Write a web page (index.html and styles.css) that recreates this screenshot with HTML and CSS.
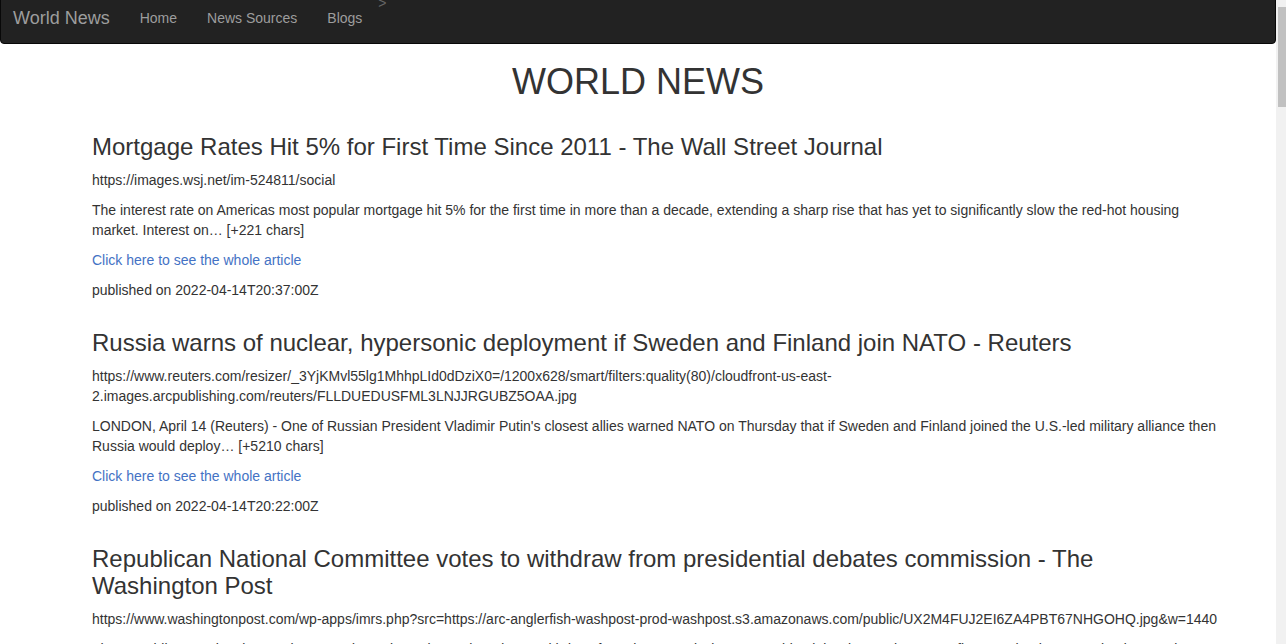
FILE: index.html
```html
<!DOCTYPE html>
<html lang="en">
<head>
<meta charset="utf-8">
<title>World News</title>
<link rel="stylesheet" href="styles.css">
</head>
<body>
<div class="app">
  <nav class="navbar">
    <a class="brand" href="#">World News</a>
    <ul class="nav">
      <li><a href="#">Home</a></li>
      <li><a href="#">News Sources</a></li>
      <li><a href="#">Blogs</a></li>
      <li class="stray">&gt;</li>
    </ul>
  </nav>
  <main class="page">
    <h1 class="title">WORLD NEWS</h1>
    <div class="articles">
      <article class="article">
        <h3>Mortgage Rates Hit 5% for First Time Since 2011 - The Wall Street Journal</h3>
        <p>https://images.wsj.net/im-524811/social</p>
        <p>The interest rate on Americas most popular mortgage hit 5% for the first time in more than a decade, extending a sharp rise that has yet to significantly slow the red-hot housing market. Interest on… [+221 chars]</p>
        <p><a href="#">Click here to see the whole article</a></p>
        <p>published on 2022-04-14T20:37:00Z</p>
      </article>
      <article class="article">
        <h3>Russia warns of nuclear, hypersonic deployment if Sweden and Finland join NATO - Reuters</h3>
        <p>https://www.reuters.com/resizer/_3YjKMvl55lg1MhhpLId0dDziX0=/1200x628/smart/filters:quality(80)/cloudfront-us-east-2.images.arcpublishing.com/reuters/FLLDUEDUSFML3LNJJRGUBZ5OAA.jpg</p>
        <p>LONDON, April 14 (Reuters) - One of Russian President Vladimir Putin's closest allies warned NATO on Thursday that if Sweden and Finland joined the U.S.-led military alliance then Russia would deploy… [+5210 chars]</p>
        <p><a href="#">Click here to see the whole article</a></p>
        <p>published on 2022-04-14T20:22:00Z</p>
      </article>
      <article class="article">
        <h3>Republican National Committee votes to withdraw from presidential debates commission - The Washington Post</h3>
        <p>https://www.washingtonpost.com/wp-apps/imrs.php?src=https://arc-anglerfish-washpost-prod-washpost.s3.amazonaws.com/public/UX2M4FUJ2EI6ZA4PBT67NHGOHQ.jpg&amp;w=1440</p>
        <p>The Republican National Committee voted unanimously on Thursday to withdraw from the Commission on Presidential Debates, the nonprofit group that has organized general election debates for decades, escalating… [+3012 chars]</p>
        <p><a href="#">Click here to see the whole article</a></p>
        <p>published on 2022-04-14T20:15:00Z</p>
      </article>
    </div>
  </main>
</div>
<div class="scrollbar" aria-hidden="true"><div class="thumb"></div></div>
</body>
</html>
```

FILE: styles.css
```css
html {
  font-family: "Liberation Sans", Arial, Helvetica, sans-serif;
  font-size: 14px;
  line-height: 20px;
  color: #333;
  background: #fff;
}
body {
  margin: 0;
  display: flex;
  align-items: stretch;
  height: 644px;
  overflow: hidden;
}
.app {
  flex: 1;
  min-width: 0;
}
.scrollbar {
  width: 10px;
  flex: none;
  background: #f1f1f1;
  display: flex;
  flex-direction: column;
  align-items: flex-end;
}
.scrollbar .thumb {
  width: 8px;
  height: 100px;
  margin-top: 7px;
  background: #c1c1c1;
}
a {
  color: #4472c4;
  text-decoration: none;
}
.navbar {
  margin-top: -8px;
  min-height: 50px;
  background: #222;
  border: 1px solid #080808;
  border-radius: 4px;
  display: flex;
  align-items: flex-start;
}
.brand {
  font-size: 18px;
  line-height: 20px;
  padding: 15px 15px 15px 12px;
  color: #9d9d9d;
}
.nav {
  list-style: none;
  margin: 0;
  padding: 0;
  display: flex;
  align-items: flex-start;
}
.nav a {
  display: block;
  padding: 15px;
  line-height: 20px;
  color: #9d9d9d;
}
.nav .stray {
  color: #666;
  line-height: 20px;
  margin-left: 1px;
}
.title {
  font-size: 36px;
  font-weight: 500;
  line-height: 1.1;
  text-align: center;
  margin: 18px 0 12px;
}
.articles {
  display: flex;
  flex-direction: column;
  width: 1130px;
  margin-left: 92px;
}
.article {
  display: flow-root;
}
.article h3 {
  font-size: 24px;
  font-weight: 500;
  line-height: 1.1;
  margin: 20px 0 10px;
}
.article p {
  margin: 0 0 10px;
}
```
